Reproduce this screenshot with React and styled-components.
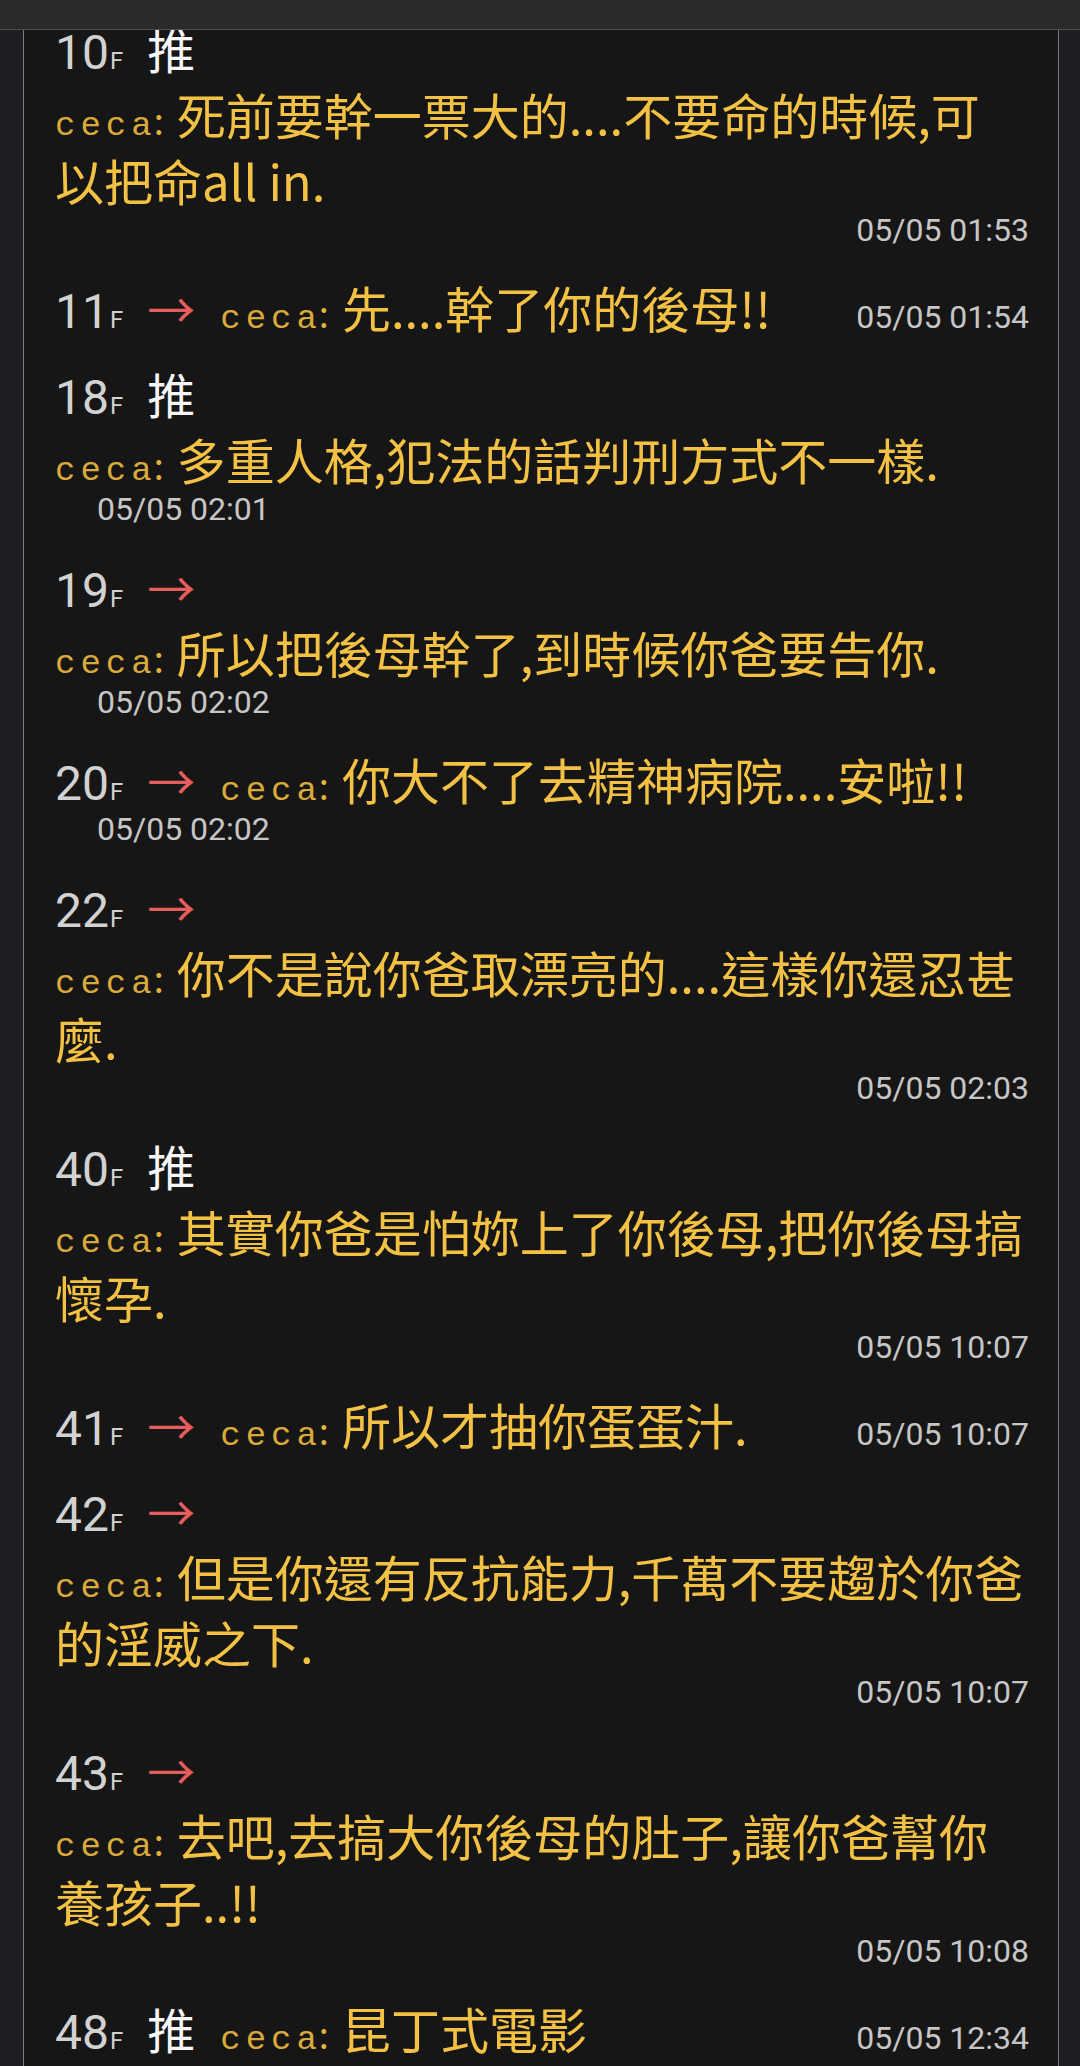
import React from "react";
import styled, { createGlobalStyle } from "styled-components";

const GlobalStyle = createGlobalStyle`
  html, body {
    margin: 0;
    padding: 0;
    background: #1d1e21;
  }
  body {
    font-family: "Noto Sans CJK TC", "Noto Sans", sans-serif;
  }
`;

const Page = styled.div`
  height: 2066px;
  overflow: hidden;
  position: relative;
  background: #1d1e21;
`;

// toolbar that stays over the scrolled thread
const TopBar = styled.header`
  position: fixed;
  top: 0;
  left: 0;
  right: 0;
  height: 29px;
  background: #2a2a2a;
  border-bottom: 1px solid #4e4e4e;
  z-index: 2;
`;

const Thread = styled.main`
  margin: 0 21px 0 23px;
  padding: 15px 29px 0 31px;
  min-height: 2066px;
  box-sizing: border-box;
  background: #161616;
  border-left: 1px solid #7a7a7a;
  border-right: 1px solid #7a7a7a;
`;

const Comment = styled.section`
  padding-bottom: 20px;
`;

const Head = styled.div`
  display: flex;
  align-items: baseline;
  height: 66px;
  line-height: 66px;
  white-space: nowrap;
`;

const Floor = styled.span`
  font-family: "Roboto", "Liberation Sans", sans-serif;
  font-size: 48px;
  color: #d2d2d2;
  & small {
    font-size: 24px;
    margin-left: 1px;
  }
`;

const Tag = styled.span`
  font-family: "Noto Sans CJK TC", sans-serif;
  font-size: 48px;
  margin-left: 24px;
  margin-right: 25px;
  color: ${(p) => (p.$kind === "arrow" ? "#e65d5d" : "#f6f6f6")};
`;

const Body = styled.div`
  font-family: "Noto Sans CJK TC", sans-serif;
  font-size: 49px;
  line-height: 66px;
  color: #f3c143;
  white-space: nowrap;
  ${(p) => p.$inline && "display: inline;"}
`;

const Author = styled.span`
  font-family: "Liberation Mono", "DejaVu Sans Mono", monospace;
  font-size: 34px;
  line-height: 1;
  letter-spacing: 5px;
  color: #d9aa3b;
`;

const Colon = styled.span`
  font-family: "Noto Sans CJK TC", sans-serif;
  font-size: 36px;
  line-height: 1;
  color: #e3b23d;
  margin: 0 13px 0 -3px;
`;

const Stamp = styled.span`
  font-family: "Roboto", "Liberation Sans", sans-serif;
  font-size: 32px;
  color: #c6c6c6;
  margin-left: auto;
`;

const StampRow = styled.div`
  font-family: "Roboto", "Liberation Sans", sans-serif;
  font-size: 32px;
  line-height: 34px;
  height: 34px;
  margin-bottom: 7px;
  color: #c6c6c6;
  text-align: ${(p) => (p.$indent ? "left" : "right")};
  padding-left: ${(p) => (p.$indent ? "42px" : "0")};
`;

const comments = [
  { floor: 10, tag: "push", lines: ["死前要幹一票大的....不要命的時候,可", "以把命all in."], time: "05/05 01:53", stamp: "right" },
  { floor: 11, tag: "arrow", inline: true, lines: ["先....幹了你的後母!!"], time: "05/05 01:54", stamp: "same" },
  { floor: 18, tag: "push", lines: ["多重人格,犯法的話判刑方式不一樣."], time: "05/05 02:01", stamp: "indent" },
  { floor: 19, tag: "arrow", lines: ["所以把後母幹了,到時候你爸要告你."], time: "05/05 02:02", stamp: "indent" },
  { floor: 20, tag: "arrow", inline: true, lines: ["你大不了去精神病院....安啦!!"], time: "05/05 02:02", stamp: "indent" },
  { floor: 22, tag: "arrow", lines: ["你不是說你爸取漂亮的....這樣你還忍甚", "麼."], time: "05/05 02:03", stamp: "right" },
  { floor: 40, tag: "push", lines: ["其實你爸是怕妳上了你後母,把你後母搞", "懷孕."], time: "05/05 10:07", stamp: "right" },
  { floor: 41, tag: "arrow", inline: true, lines: ["所以才抽你蛋蛋汁."], time: "05/05 10:07", stamp: "same" },
  { floor: 42, tag: "arrow", lines: ["但是你還有反抗能力,千萬不要趨於你爸", "的淫威之下."], time: "05/05 10:07", stamp: "right" },
  { floor: 43, tag: "arrow", lines: ["去吧,去搞大你後母的肚子,讓你爸幫你", "養孩子..!!"], time: "05/05 10:08", stamp: "right" },
  { floor: 48, tag: "push", inline: true, lines: ["昆丁式電影"], time: "05/05 12:34", stamp: "same" },
];

function Message({ c }) {
  return (
    <Body $inline={c.inline}>
      <Author>ceca</Author>
      <Colon>:</Colon>
      {c.lines.map((l, i) => (
        <React.Fragment key={i}>
          {i > 0 && <br />}
          {l}
        </React.Fragment>
      ))}
    </Body>
  );
}

function CommentItem({ c }) {
  return (
    <Comment>
      <Head>
        <Floor>
          {c.floor}
          <small>F</small>
        </Floor>
        <Tag $kind={c.tag}>{c.tag === "arrow" ? "→" : "推"}</Tag>
        {c.inline && <Message c={c} />}
        {c.stamp === "same" && <Stamp>{c.time}</Stamp>}
      </Head>
      {!c.inline && <Message c={c} />}
      {c.stamp === "right" && <StampRow>{c.time}</StampRow>}
      {c.stamp === "indent" && <StampRow $indent>{c.time}</StampRow>}
    </Comment>
  );
}

export default function App() {
  return (
    <Page>
      <GlobalStyle />
      <TopBar />
      <Thread>
        {comments.map((c) => (
          <CommentItem key={c.floor} c={c} />
        ))}
      </Thread>
    </Page>
  );
}
